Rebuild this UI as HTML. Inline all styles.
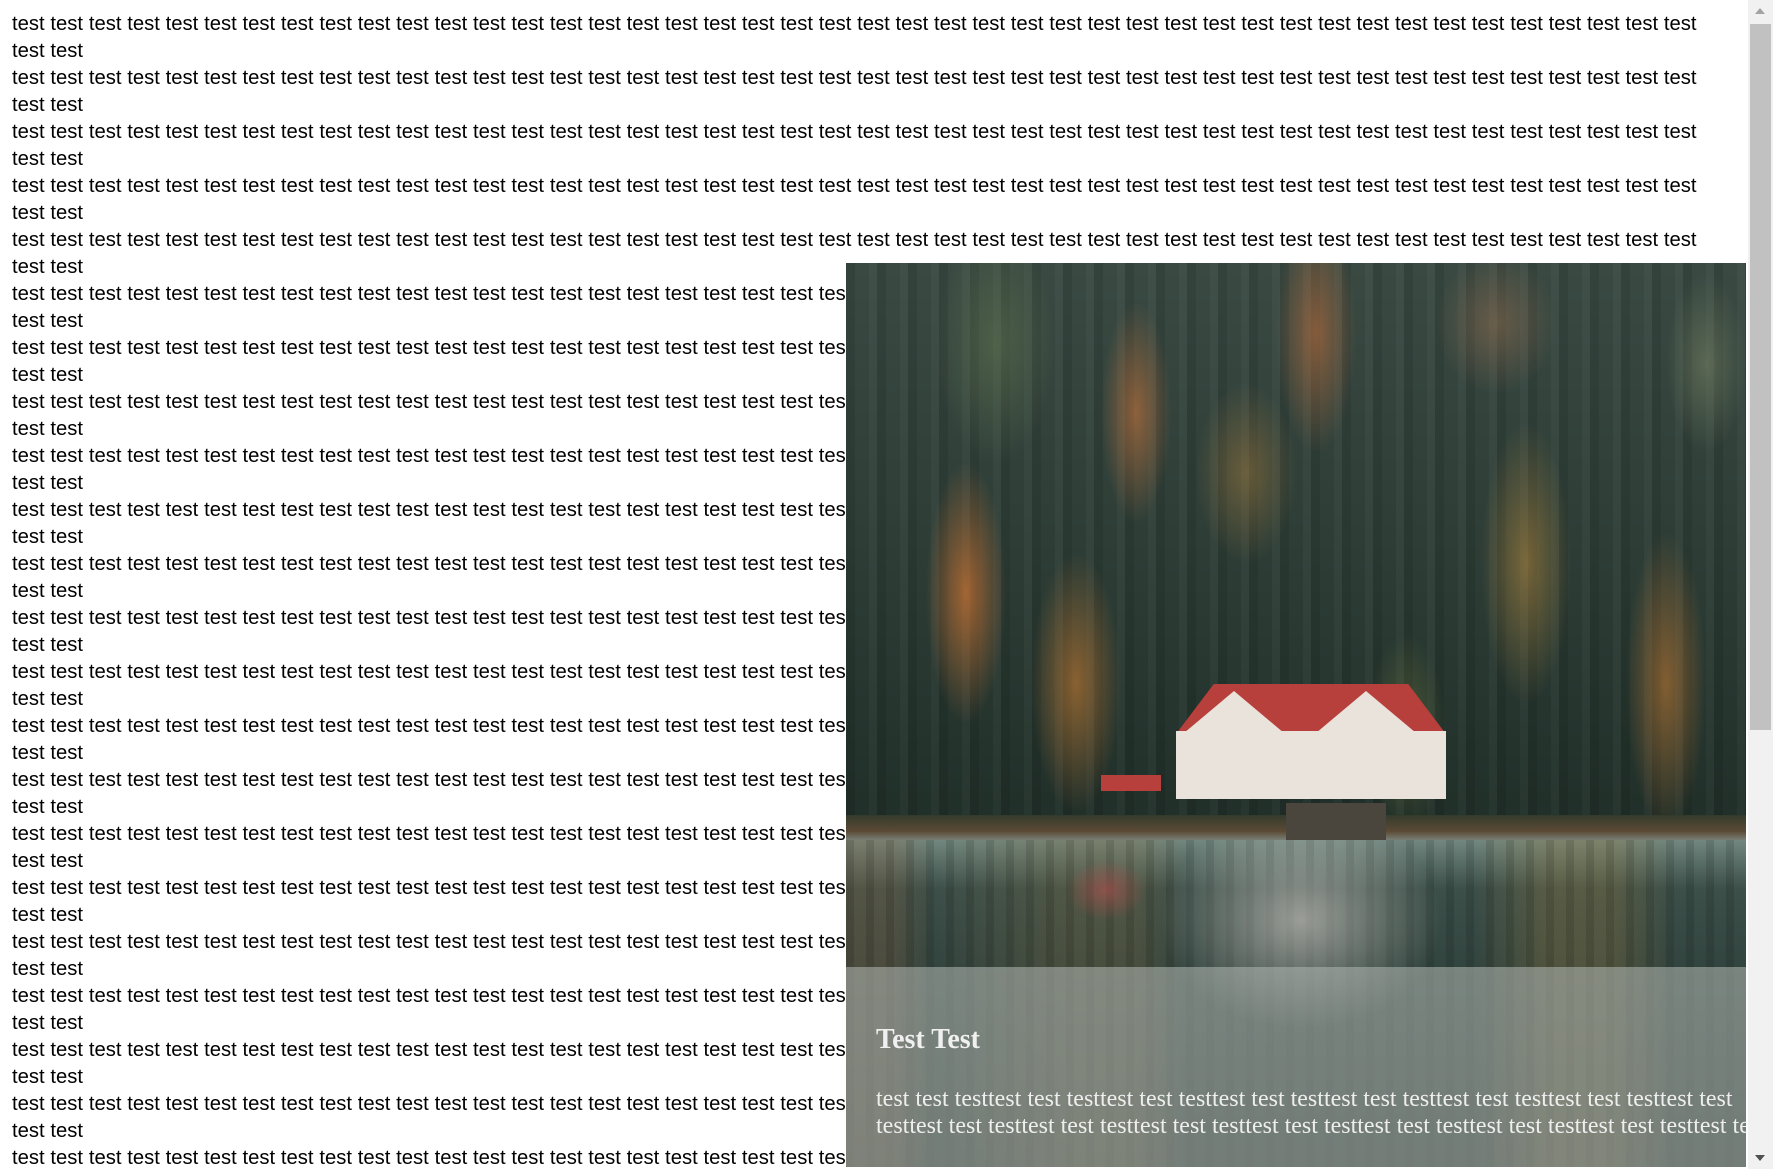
<!DOCTYPE html>
<html><head><meta charset="utf-8">
<style>
html,body{margin:0;padding:0;width:1773px;height:1169px;overflow:hidden;background:#fff}
#txt{position:absolute;left:12px;top:11px;height:1158px;overflow:hidden;font-family:"Liberation Sans",Arial,sans-serif;font-size:20.25px;line-height:27px;color:#000;white-space:nowrap;word-spacing:0.15px}
#pic{position:absolute;left:846px;top:263px;width:900px;height:904px;overflow:hidden;
background:
radial-gradient(ellipse 40px 130px at 120px 330px,rgba(190,110,50,.8),transparent),
radial-gradient(ellipse 35px 110px at 290px 150px,rgba(180,110,60,.7),transparent),
radial-gradient(ellipse 45px 130px at 230px 420px,rgba(190,120,50,.65),transparent),
radial-gradient(ellipse 50px 90px at 400px 210px,rgba(160,120,60,.5),transparent),
radial-gradient(ellipse 40px 120px at 470px 70px,rgba(190,110,60,.6),transparent),
radial-gradient(ellipse 45px 140px at 680px 300px,rgba(170,130,60,.6),transparent),
radial-gradient(ellipse 40px 150px at 820px 420px,rgba(190,120,50,.6),transparent),
radial-gradient(ellipse 60px 70px at 650px 60px,rgba(150,110,80,.5),transparent),
radial-gradient(ellipse 40px 90px at 860px 100px,rgba(120,130,100,.55),transparent),
radial-gradient(ellipse 60px 120px at 150px 80px,rgba(100,120,80,.5),transparent),
radial-gradient(ellipse 40px 100px at 560px 470px,rgba(110,120,60,.5),transparent),
repeating-linear-gradient(90deg,rgba(0,0,0,.1) 0 9px,transparent 9px 23px,rgba(255,255,255,.03) 23px 31px),
linear-gradient(#3a4a43 0%,#2a3a33 40%,#1d2b25 70%,#1b2823 100%);}
#water{position:absolute;left:0;top:577px;width:900px;height:327px;
background:
radial-gradient(ellipse 140px 110px at 455px 80px,rgba(235,225,220,.55),transparent),
radial-gradient(ellipse 40px 30px at 260px 50px,rgba(190,80,80,.55),transparent),
repeating-linear-gradient(90deg,rgba(0,0,0,.12) 0 8px,transparent 8px 20px),
linear-gradient(90deg,rgba(150,100,60,.25) 0 5%,transparent 10%,rgba(140,110,60,.25) 25% 32%,transparent 38%,transparent 70%,rgba(150,120,60,.3) 78% 85%,transparent 92%),
linear-gradient(#71877f 0%,#3c4f49 15%,#2a3b36 60%,#22302b 100%);}
#shore{position:absolute;left:0;top:552px;width:900px;height:27px;background:linear-gradient(#343a2b,#5b4a35 60%,#7f8b85)}
.roof{position:absolute;background:#b8403c}
.wall{position:absolute;background:#e9e3dc}
#ov{position:absolute;left:0;top:704px;width:900px;height:200px;background:rgba(170,176,172,.6)}
#ov h1{position:absolute;left:30px;top:57px;margin:0;font-family:"Liberation Serif",serif;font-weight:bold;font-size:28px;color:#f0f0f0}
#ov p{position:absolute;left:30px;top:119px;margin:0;font-family:"Liberation Serif",serif;font-size:24px;line-height:27px;color:#eee;white-space:nowrap}
#sb{position:absolute;left:1748px;top:0;width:25px;height:1169px;background:#f1f1f1}
#thumb{position:absolute;left:2px;top:24px;width:21px;height:706px;background:#c1c1c1}
</style></head><body>
<div id="txt"></div>
<div id="pic">
 <div id="shore"></div>
 <div class="roof" style="left:330px;top:421px;width:270px;height:50px;clip-path:polygon(0 100%,14% 0,86% 0,100% 100%)"></div>
 <div class="wall" style="left:330px;top:468px;width:270px;height:68px"></div>
 <div class="wall" style="left:338px;top:428px;width:100px;height:42px;clip-path:polygon(50% 0,100% 100%,0 100%)"></div>
 <div class="wall" style="left:470px;top:428px;width:100px;height:42px;clip-path:polygon(50% 0,100% 100%,0 100%)"></div>
 <div class="roof" style="left:255px;top:512px;width:60px;height:16px"></div>
 <div style="position:absolute;left:440px;top:540px;width:100px;height:40px;background:#4a463e"></div>
 <div id="water"></div>
 <div id="ov"><h1>Test Test</h1><p>test test testtest test testtest test testtest test testtest test testtest test testtest test testtest test<br>testtest test testtest test testtest test testtest test testtest test testtest test testtest test testtest test testtest test testtest test</p></div>
</div>
<div id="sb"><div id="thumb"></div>
<div style="position:absolute;left:7px;top:8px;border:5px solid transparent;border-bottom:6px solid #a3a3a3;border-top:0"></div>
<div style="position:absolute;left:7px;top:1155px;border:5px solid transparent;border-top:6px solid #505050;border-bottom:0"></div>
</div>
<script>
var w=[];for(var i=0;i<44;i++)w.push('test');var l=w.join(' ');
var h='';for(var j=0;j<22;j++)h+=l+'<br>test test<br>';
document.getElementById('txt').innerHTML=h;
</script>
</body></html>
